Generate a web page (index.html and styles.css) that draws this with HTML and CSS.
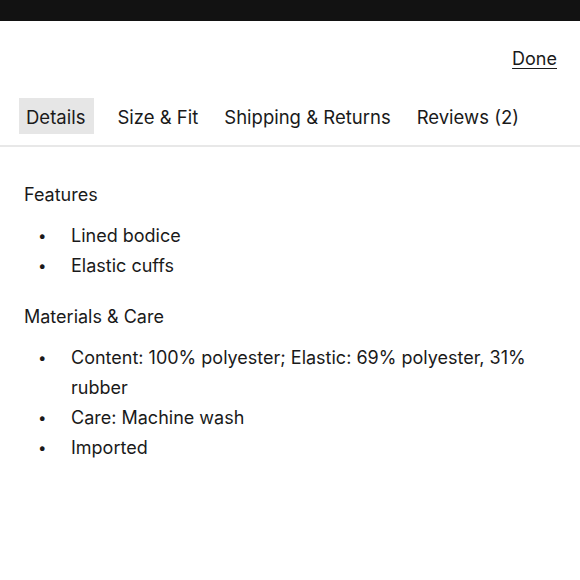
FILE: index.html
```html
<!DOCTYPE html>
<html>
<head>
<meta charset="utf-8">
<link rel="stylesheet" href="styles.css">
</head>
<body>
<div class="topbar"></div>
<div class="done-row"><a class="done">Done</a></div>
<nav class="tabs">
  <span class="tab active">Details</span>
  <span class="tab">Size &amp; Fit</span>
  <span class="tab">Shipping &amp; Returns</span>
  <span class="tab">Reviews (2)</span>
</nav>
<main class="content">
  <h3 class="heading">Features</h3>
  <ul class="list">
    <li>Lined bodice</li>
    <li>Elastic cuffs</li>
  </ul>
  <h3 class="heading">Materials &amp; Care</h3>
  <ul class="list">
    <li>Content: 100% polyester; Elastic: 69% polyester, 31% rubber</li>
    <li>Care: Machine wash</li>
    <li>Imported</li>
  </ul>
</main>
</body>
</html>
```
FILE: styles.css
```css
html, body { margin: 0; padding: 0; background: #fff; }
body { font-family: Inter, "Open Sans", sans-serif; color: #1a1a1a; font-size: 18px; }
.topbar { height: 21px; background: #121212; }
.done-row { display: flex; justify-content: flex-end; padding: 26px 23px 0 0; height: 50px; box-sizing: border-box; line-height: 24px; }
.done { text-decoration: underline; text-underline-offset: 3px; text-decoration-thickness: 1px; color: #1a1a1a; }
.tabs { display: flex; gap: 12px; padding: 27px 0 11px 19px; border-bottom: 2px solid #e8e8e8; font-size: 18.5px; }
.tab { padding: 0 7px; height: 36px; line-height: 38px; white-space: nowrap; }
.tab.active { background: #e6e6e6; padding-right: 9px; margin-right: 4px; }
.content { padding: 33px 24px 0 24px; }
.heading { font-weight: 400; font-size: 18px; margin: 0; line-height: 30px; }
.list { list-style: none; margin: 11px 0 22px 0; padding: 0; line-height: 29.7px; }
.list li { display: grid; grid-template-columns: 47px 1fr; }
.list li::before { content: "•"; font-size: 15px; padding-left: 14px; }
```
